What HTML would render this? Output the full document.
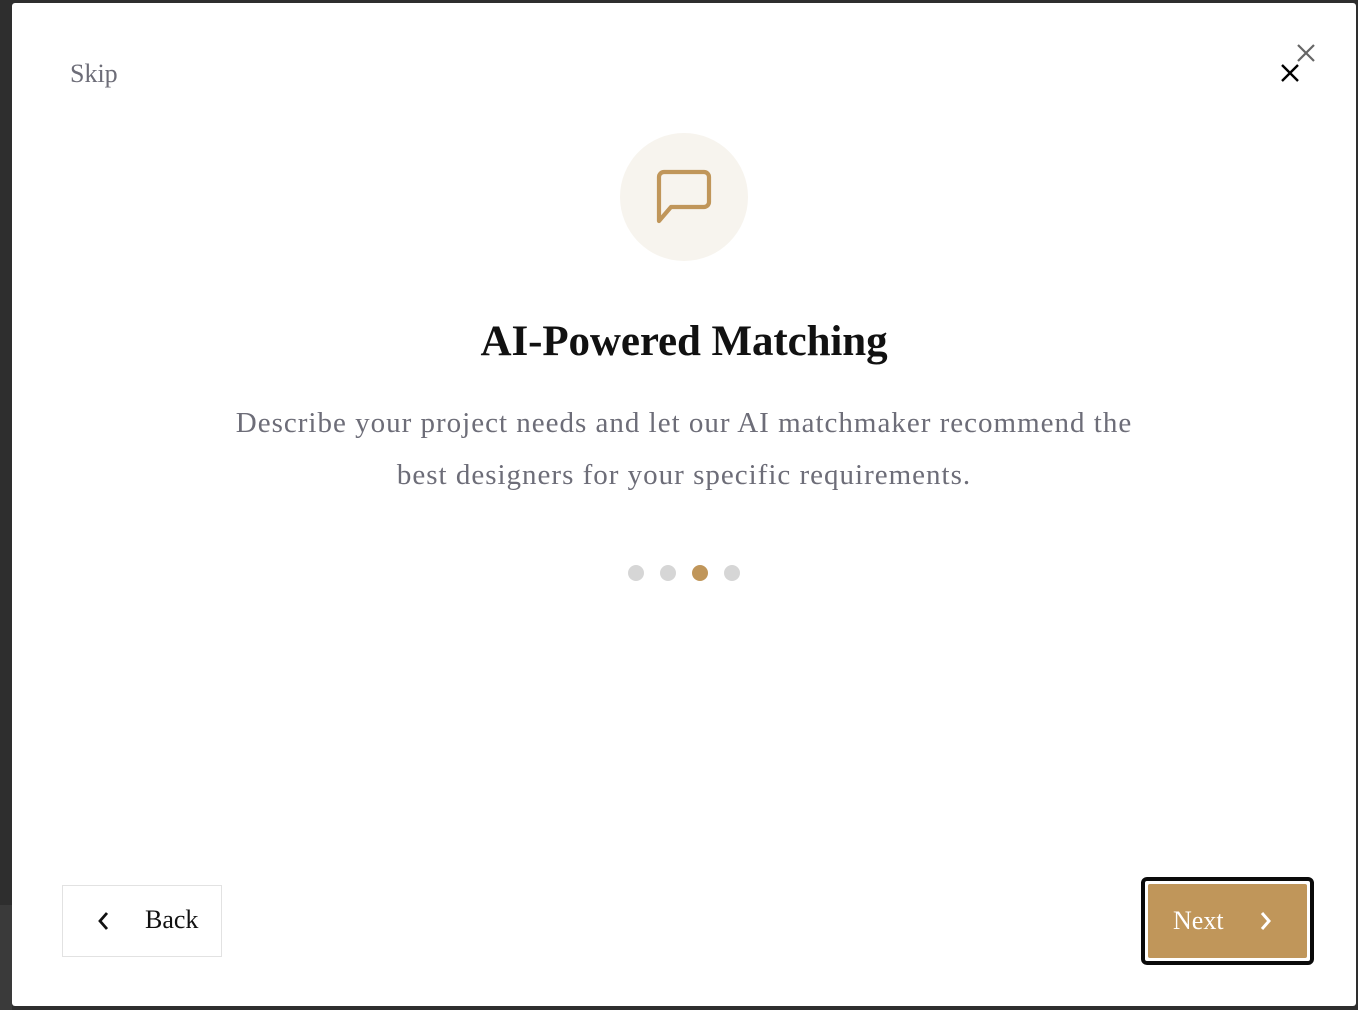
<!DOCTYPE html>
<html><head><style>
html,body{margin:0;padding:0;width:1358px;height:1010px;overflow:hidden;background:#2e2e2e;font-family:"Liberation Serif",serif;}
.bgl{position:absolute;left:0;top:905px;width:12px;height:105px;background:#3a3a3a}
.modal{position:absolute;left:12px;top:3px;width:1344px;height:1003px;background:#fff;border-radius:3px}
.skip{position:absolute;left:70px;top:59px;font-size:26px;color:#6d6d78}
.circle{position:absolute;left:620px;top:133px;width:128px;height:128px;border-radius:50%;background:#f7f4ee}
h1{position:absolute;left:0;width:1368px;top:317px;margin:0;text-align:center;font-size:43px;font-weight:bold;color:#111;letter-spacing:-0.1px}
.desc{position:absolute;left:0;width:1368px;top:397px;text-align:center;font-size:29px;letter-spacing:1px;line-height:52px;color:#6d6d78}
.dot{position:absolute;top:565px;width:16px;height:16px;border-radius:50%;background:#d6d6d6}
.back{position:absolute;left:62px;top:885px;width:160px;height:72px;border:1px solid #e2e2e2;box-sizing:border-box}
.back span{position:absolute;left:82px;top:19px;font-size:26px;color:#111}
.nextw{position:absolute;left:1141px;top:877px;width:173px;height:88px;border:4px solid #0a0a0a;border-radius:6px;box-sizing:border-box;background:#fff}
.next{position:absolute;left:3px;top:3px;right:3px;bottom:3px;background:#c0965a;border-radius:2px}
.next span{position:absolute;left:25px;top:22px;font-size:26px;color:#fff}
</style></head><body>
<div class="bgl"></div>
<div class="modal"></div>
<div class="skip">Skip</div>
<svg style="position:absolute;left:1296px;top:43px" width="20" height="20"><path d="M2 2L18 18M18 2L2 18" stroke="#666" stroke-width="2.2"/></svg>
<svg style="position:absolute;left:1280px;top:63px" width="20" height="20"><path d="M2 2L18 18M18 2L2 18" stroke="#000" stroke-width="2.4"/></svg>
<div class="circle"></div>
<svg style="position:absolute;left:650px;top:165px" width="66" height="66"><path d="M9 56V12a5 5 0 0 1 5-5h40a5 5 0 0 1 5 5v25a5 5 0 0 1-5 5H21z" fill="none" stroke="#c0965a" stroke-width="4.2" stroke-linejoin="round"/></svg>
<h1>AI-Powered Matching</h1>
<div class="desc">Describe your project needs and let our AI matchmaker recommend the<br>best designers for your specific requirements.</div>
<div class="dot" style="left:628px"></div>
<div class="dot" style="left:660px"></div>
<div class="dot" style="left:692px;background:#c0965a"></div>
<div class="dot" style="left:724px"></div>
<div class="back"><svg style="position:absolute;left:34px;top:25px" width="14" height="20"><path d="M10 2L3 10L10 18" fill="none" stroke="#111" stroke-width="2.8"/></svg><span>Back</span></div>
<div class="nextw"><div class="next"><span>Next</span><svg style="position:absolute;left:110px;top:27px" width="14" height="20"><path d="M4 2L11 10L4 18" fill="none" stroke="#fff" stroke-width="3"/></svg></div></div>
</body></html>
